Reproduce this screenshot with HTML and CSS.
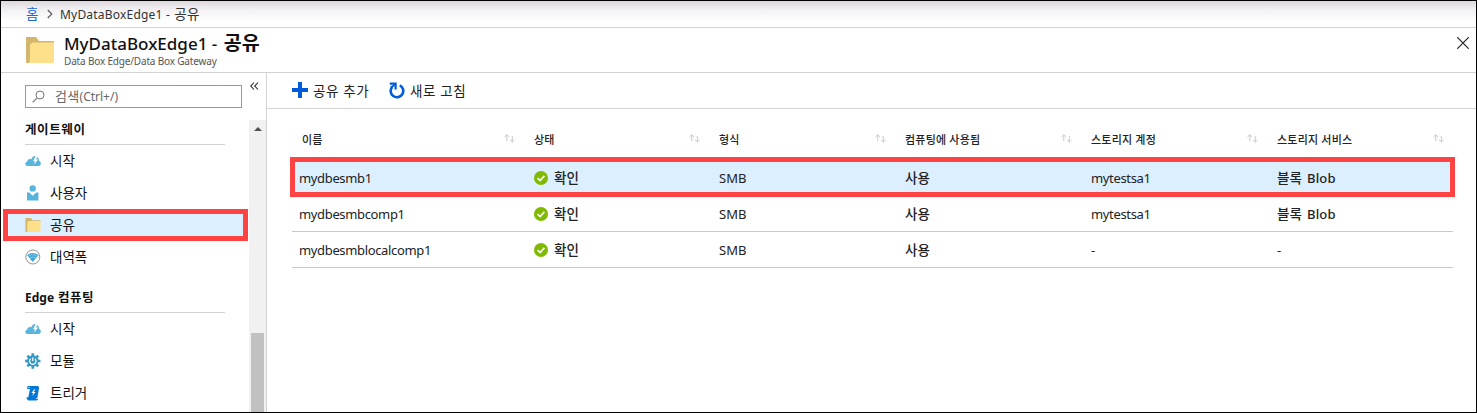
FILE: index.html
```html
<!DOCTYPE html>
<html lang="ko">
<head>
<meta charset="utf-8">
<title>MyDataBoxEdge1 - 공유</title>
<link rel="stylesheet" href="styles.css">
</head>
<body>
<svg class="defs" width="0" height="0">
  <symbol id="folder" viewBox="0 0 28 26"><path d="M0 0h10l3 4h14q1 0 1 1v3H4v18H1q-1 0-1-1z" fill="#d2b66d"/><path d="M4 7.500 6.500 5.500H28V25q0 1-1 1H2.500Q4 25 4 22z" fill="#ffe08a"/></symbol>
  <symbol id="cloud" viewBox="0 0 16 16"><path d="M2.500 13C-.3 13-.5 9.100 2.200 8.700 2.200 6.300 4.500 5.500 6 6.600 7 3.800 9 2.600 10.600 3L8.100 8.300h2.100L8.500 12l4.700-5.500h-2.300l1.500-2.600c1.200.9 1.800 2.400 1.600 4 2.800.6 2.400 5.100-.6 5.100z" fill="#59b4d9"/></symbol>
  <symbol id="user" viewBox="0 0 16 16"><circle cx="7.700" cy="3.400" r="3.200" fill="#59b4d9"/><path d="M2 7.500h2.300l3.400 3.200 3.500-3.200h2.200v8H2z" fill="#59b4d9"/></symbol>
  <symbol id="wifi" viewBox="0 0 16 16"><circle cx="7.800" cy="8" r="7" fill="#fff" stroke="#7a7a7a" stroke-width=".8"/><path d="M2 6Q7.800 1.800 13.600 6L7.800 13z" fill="#3fa3d3"/><g fill="none" stroke="#c4e4f3" stroke-width=".6"><path d="M3.200 7.300Q7.800 4 12.400 7.300"/><path d="M4.700 9.100Q7.800 6.900 10.900 9.100"/></g></symbol>
  <symbol id="gear" viewBox="0 0 16 16"><circle cx="7.800" cy="8" r="5.800" fill="#3999c6"/><path d="M7.800.3v15.400M.1 8h15.400M2.400 2.600l10.800 10.800M13.200 2.600 2.400 13.400" stroke="#3999c6" stroke-width="2.700"/><path d="M5.600 5.800a3.200 3.200 0 1 0 4.400 0M7.800 4.400v3.600" fill="none" stroke="#fff" stroke-width="1.200"/></symbol>
  <symbol id="script" viewBox="0 0 16 16"><path d="M3.300 1h9.500q1.700.3 1.200 2.200L12.300 13H3.200L4.900 4H2.300Q1 1.800 3.300 1z" fill="#0078d7"/><path d="M1.500 12.300h8.800q.1 1.400 1.300 1.400h1.600q-.3 1.700-2 1.700H3.500q-2.200-.3-2-3.100z" fill="#0078d7"/><path d="M2.400 2.500h2.600" stroke="#7fc4f2"/><path d="M9.300 4.200 6.400 8h1.900l-1.100 3 3.400-4H8.700l1.700-2.800z" fill="#fff"/></symbol>
  <symbol id="ok" viewBox="0 0 14 14"><circle cx="7" cy="7" r="7" fill="#7fba00"/><path d="m3.600 7.100 2.500 2.500 4.300-4.700" fill="none" stroke="#fff" stroke-width="1.600"/></symbol>
  <symbol id="sort" viewBox="0 0 11 9"><path d="M2.800 7V.8M.5 3 2.800.8 5.100 3M8.300 2v6M6 5.800 8.300 8l2.300-2.200" fill="none" stroke="#c4c4c4" stroke-width=".9"/></symbol>
</svg>
<div class="page">
  <nav class="crumbs">
    <a class="home">홈</a>
    <svg class="crumb-arrow" width="6" height="10" viewBox="0 0 6 10"><path d="m.8 1 4 4-4 4" fill="none" stroke="#555" stroke-width="1.100"/></svg>
    <span class="crumb-name">MyDataBoxEdge1 - <span class="crumb-ko">공유</span></span>
  </nav>
  <header class="header">
    <svg class="header-icon" width="28" height="26"><use href="#folder"/></svg>
    <div class="titles">
      <h1 class="title"><span class="title-name">MyDataBoxEdge1 -</span> <span class="title-ko">공유</span></h1>
      <div class="subtitle">Data Box Edge/Data Box Gateway</div>
    </div>
    <svg class="close" width="12" height="12" viewBox="0 0 12 12"><path d="m.3.300 11.400 11.400M11.700.300.3 11.700" stroke="#222" stroke-width="1.200"/></svg>
  </header>
  <div class="body">
    <aside class="sidebar">
      <div class="search-row">
        <div class="search">
          <svg width="13" height="13" viewBox="0 0 13 13"><path d="m.7 12.300 4-4" stroke="#777" stroke-width="1.200"/><circle cx="8" cy="5" r="4" fill="none" stroke="#777"/></svg>
          <span><span class="search-ko">검색</span>(Ctrl+/)</span>
        </div>
        <svg class="collapse" width="9" height="8" viewBox="0 0 9 8"><path d="M4 .5.8 4 4 7.500M8 .5 4.800 4 8 7.500" fill="none" stroke="#222" stroke-width="1.100"/></svg>
      </div>
      <div class="menu-area">
        <div class="menu">
          <h2 class="group">게이트웨이</h2>
          <div class="item"><svg class="ic"><use href="#cloud"/></svg>시작</div>
          <div class="item"><svg class="ic"><use href="#user"/></svg>사용자</div>
          <div class="item selected"><svg class="ic small-folder"><use href="#folder"/></svg>공유</div>
          <div class="item"><svg class="ic"><use href="#wifi"/></svg>대역폭</div>
          <h2 class="group second"><span class="edge">Edge</span> 컴퓨팅</h2>
          <div class="item"><svg class="ic"><use href="#cloud"/></svg>시작</div>
          <div class="item"><svg class="ic"><use href="#gear"/></svg>모듈</div>
          <div class="item"><svg class="ic"><use href="#script"/></svg>트리거</div>
        </div>
        <div class="scrollbar">
          <svg width="8" height="4" viewBox="0 0 8 4"><path d="M0 4 4 0l4 4z" fill="#505050"/></svg>
          <div class="thumb"></div>
        </div>
      </div>
    </aside>
    <main class="main">
      <div class="toolbar">
        <svg width="16" height="16" viewBox="0 0 16 16"><path d="M8 0v16M0 8h16" stroke="#015cda" stroke-width="4"/></svg>
        <span class="add">공유 추가</span>
        <svg width="16" height="17" viewBox="0 0 16 17"><path d="M10.800 3.300a6.300 6.300 0 1 1-7.600 1.500" fill="none" stroke="#015cda" stroke-width="2.600"/><path d="M.8 1.700h5.800v5.800" fill="none" stroke="#015cda" stroke-width="2.200"/><path d="m2 5.500 4-3" stroke="#015cda" stroke-width="2"/></svg>
        <span class="refresh">새로 고침</span>
      </div>
      <div class="table">
        <div class="row head">
          <div class="cell first">이름<svg class="sort"><use href="#sort"/></svg></div>
          <div class="cell">상태<svg class="sort"><use href="#sort"/></svg></div>
          <div class="cell">형식<svg class="sort"><use href="#sort"/></svg></div>
          <div class="cell">컴퓨팅에 사용됨<svg class="sort"><use href="#sort"/></svg></div>
          <div class="cell">스토리지 계정<svg class="sort"><use href="#sort"/></svg></div>
          <div class="cell">스토리지 서비스<svg class="sort last"><use href="#sort"/></svg></div>
        </div>
        <div class="row active">
          <div class="cell name">mydbesmb1</div><div class="cell k"><svg class="ok"><use href="#ok"/></svg>확인</div><div class="cell smb">SMB</div><div class="cell k">사용</div><div class="cell name">mytestsa1</div><div class="cell k">블록 <span class="blob">Blob</span></div>
        </div>
        <div class="row">
          <div class="cell name">mydbesmbcomp1</div><div class="cell k"><svg class="ok"><use href="#ok"/></svg>확인</div><div class="cell smb">SMB</div><div class="cell k">사용</div><div class="cell name">mytestsa1</div><div class="cell k">블록 <span class="blob">Blob</span></div>
        </div>
        <div class="row">
          <div class="cell name">mydbesmblocalcomp1</div><div class="cell k"><svg class="ok"><use href="#ok"/></svg>확인</div><div class="cell smb">SMB</div><div class="cell k">사용</div><div class="cell">-</div><div class="cell">-</div>
        </div>
      </div>
    </main>
  </div>
</div>
</body>
</html>
```
FILE: styles.css
```css
* { box-sizing: border-box; }
body { margin: 0; font-family: "Noto Sans", "Noto Sans CJK KR", sans-serif; font-size: 13px; color: #111; }
svg { flex: none; display: block; }
.defs { position: absolute; }
.page { width: 1477px; height: 413px; border: 1px solid #000; background: #fff; display: flex; flex-direction: column; overflow: hidden; }

.crumbs { height: 27px; flex: none; display: flex; align-items: center; padding: 0 0 0 25px; border-bottom: 1px solid #d2d2d2; background: linear-gradient(#dcd7dc, #f3f1f3 9px, #fff 20px); font-size: 12px; color: #333; white-space: pre; }
.home { color: #2566e0; width: 21px; font-size: 13.5px; line-height: 18px; }
.crumb-arrow { margin-right: 7px; }
.crumb-name { letter-spacing: .2px; line-height: 18px; }
.crumb-ko { font-size: 13.5px; margin-left: 1px; }

.header { height: 45px; flex: none; display: flex; border-bottom: 1px solid #d2d2d2; padding-left: 25px; }
.header-icon { margin-top: 9px; }
.titles { margin-left: 10px; flex: 1; white-space: nowrap; }
.title { margin: 2px 0 0; height: 26px; font-size: 17px; line-height: 26px; font-weight: 500; color: #111; }
.title-ko { font-size: 19.5px; font-weight: 700; margin-left: 2px; }
.subtitle { font-size: 10px; line-height: 11px; letter-spacing: -.17px; color: #555; }
.close { margin: 9px 7px 0 0; }

.body { flex: 1; display: flex; min-height: 0; }
.sidebar { width: 266px; flex: none; border-right: 1px solid #d2d2d2; display: flex; flex-direction: column; }
.search-row { height: 47px; flex: none; display: flex; padding: 12px 0 0 24px; }
.search { width: 217px; height: 23px; border: 1px solid #999; display: flex; align-items: center; padding-left: 6px; gap: 10px; font-size: 12px; line-height: 20px; color: #666; }
.search-ko { font-size: 13px; letter-spacing: .3px; }
.collapse { margin: -3px 0 0 8px; }
.menu-area { flex: 1; display: flex; min-height: 0; }
.menu { flex: 1; overflow: hidden; }
.group { margin: 0 24px; height: 25px; border-bottom: 1px solid #d2d2d2; font-size: 12.5px; line-height: 19px; letter-spacing: .6px; font-weight: 700; color: #111; }
.second { height: 40px; padding-top: 15px; }
.edge { font-size: 12px; letter-spacing: 0; }
.item { height: 32px; display: flex; align-items: center; gap: 9px; padding: 0 0 0 24px; font-size: 13.5px; line-height: 20px; }
.ic { width: 16px; height: 16px; }
.selected { margin: 0 1px 0 2px; padding: 0 0 0 17px; border: 5px solid #ff4343; background: #dcefff; }
.small-folder { height: 14px; }
.scrollbar { width: 17px; background: #f1f1f1; display: flex; flex-direction: column; align-items: center; padding-top: 7px; }
.thumb { width: 13px; flex: 1; margin-top: 202px; background: #c1c1c1; }

.main { flex: 1; min-width: 0; display: flex; flex-direction: column; }
.toolbar { height: 36px; flex: none; border-bottom: 1px solid #d2d2d2; display: flex; align-items: center; padding: 0 0 1px 25px; font-size: 13.5px; letter-spacing: .6px; color: #222; white-space: nowrap; }
.add { margin-left: 5px; width: 76px; }
.refresh { margin-left: 5px; }
.table { width: 1161px; margin: 12px 0 0 25px; }
.row { display: grid; grid-template-columns: 235px 185px 186px 186px 186px 183px; height: 36px; border-bottom: 1px solid #c9c9c9; white-space: pre; color: #222; }
.cell { display: flex; align-items: center; padding-left: 7px; }
.head { font-size: 11px; font-weight: 500; letter-spacing: .2px; border-bottom: 0; }
.first { padding-left: 10px; }
.sort { width: 11px; height: 9px; margin: -1px 12px 0 auto; }
.last { margin-right: 9px; }
.active { width: 1165px; height: 40px; margin: 0 0 -1px -2px; border: 5px solid #ff4343; background: #dcefff; padding: 1px 0 0; grid-template-columns: 232px 185px 186px 186px 186px 180px; }
.active .cell:first-child { padding-left: 4px; }
.name { letter-spacing: -.35px; }
.k { font-size: 13.5px; font-weight: 500; line-height: 20px; letter-spacing: .2px; }
.blob { font-size: 13px; margin-left: 1px; }
.ok { width: 14px; height: 14px; margin-right: 6px; }
```
